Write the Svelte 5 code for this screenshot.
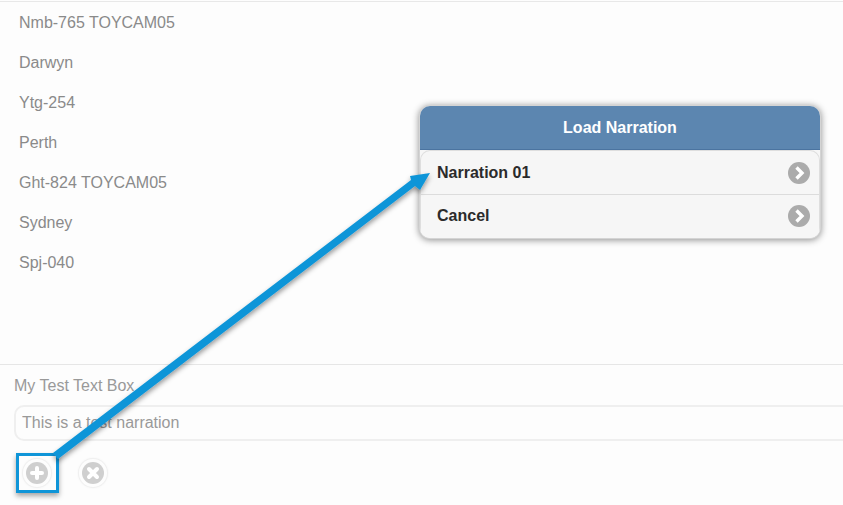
<script>
	const places = ['Nmb-765 TOYCAM05', 'Darwyn', 'Ytg-254', 'Perth', 'Ght-824 TOYCAM05', 'Sydney', 'Spj-040'];
	const options = ['Narration 01', 'Cancel'];
</script>

<div class="page">
	<ul class="list">
		{#each places as place}
			<li>{place}</li>
		{/each}
	</ul>

	<div class="form">
		<label for="narration">My Test Text Box</label>
		<input id="narration" type="text" value="This is a test narration" />
		<div class="actions">
			<button class="round" aria-label="Add">
				<svg width="22" height="22" viewBox="0 0 22 22">
					<circle cx="11" cy="11" r="11" fill="#cfcfcf" />
					<path d="M11 6v10M6 11h10" stroke="#fff" stroke-width="4" stroke-linecap="round" />
				</svg>
			</button>
			<button class="round" aria-label="Delete">
				<svg width="22" height="22" viewBox="0 0 22 22">
					<circle cx="11" cy="11" r="11" fill="#cfcfcf" />
					<path d="M7 7l8 8M15 7l-8 8" stroke="#fff" stroke-width="4" stroke-linecap="round" />
				</svg>
			</button>
		</div>
	</div>

	<div class="dialog">
		<h1>Load Narration</h1>
		<div class="menu">
			{#each options as option}
				<div class="option">
					<span>{option}</span>
					<svg width="22" height="22" viewBox="0 0 22 22">
						<circle cx="11" cy="11" r="11" fill="#ababab" />
						<path d="M8.500 5.500L14 11l-5.500 5.500" fill="none" stroke="#fff" stroke-width="3.400" />
					</svg>
				</div>
			{/each}
		</div>
	</div>

	<div class="highlight"></div>

	<svg class="arrow" width="843" height="505" viewBox="0 0 843 505">
		<defs>
			<filter id="soft" x="-10%" y="-10%" width="120%" height="120%">
				<feDropShadow dx="0" dy="3" stdDeviation="2.500" flood-color="#000" flood-opacity="0.4" />
			</filter>
		</defs>
		<path
			d="M53 453 L58 459 L415 186 L420 190 L430 173 L410 176 L411 180 Z"
			fill="#0f95d8"
			filter="url(#soft)"
		/>
	</svg>
</div>

<style>
	:global(body) {
		margin: 0;
		background: #fdfdfd;
	}

	.page {
		position: relative;
		width: 843px;
		height: 505px;
		overflow: hidden;
		font-family: 'Liberation Sans', Arial, sans-serif;
		font-size: 16px;
		color: #8a8a8a;
	}

	.list {
		list-style: none;
		margin: 1px 0 0;
		padding: 2px 0 0;
		height: 363px;
		box-sizing: border-box;
		border-top: 1px solid #e8e8e8;
	}

	.list li {
		height: 40px;
		line-height: 38px;
		padding-left: 19px;
	}

	.form {
		border-top: 1px solid #e6e6e6;
		padding: 12px 0 0 14px;
	}

	label {
		display: block;
		line-height: 18px;
		color: #999;
	}

	input {
		display: block;
		box-sizing: border-box;
		width: 860px;
		height: 36px;
		margin-top: 10px;
		padding: 0 6px;
		border: 2px solid #efefef;
		border-radius: 10px;
		background: #fdfdfd;
		font: inherit;
		color: #999;
		outline: none;
	}

	.actions {
		display: flex;
		gap: 28px;
		margin-top: 18px;
		padding-left: 9px;
	}

	.round {
		display: flex;
		width: 28px;
		height: 28px;
		padding: 0;
		align-items: center;
		justify-content: center;
		border: 0;
		border-radius: 50%;
		background: #fdfdfd;
		box-shadow: 0 0 0 1px #f0f0f0, 0 0 3px #e8e8e8;
	}

	.dialog {
		position: absolute;
		left: 420px;
		top: 106px;
		width: 400px;
		height: 132px;
		display: flex;
		flex-direction: column;
		border-radius: 10px;
		background: #f6f6f6;
		box-shadow: 0 0 0 1px #d4d4d4, 0 1px 7px 1px rgba(0, 0, 0, 0.45);
		overflow: hidden;
	}

	h1 {
		margin: 0;
		height: 44px;
		line-height: 43px;
		flex: none;
		box-sizing: border-box;
		background: #5c86b0;
		border-bottom: 1px solid #4b74a0;
		color: #fff;
		font-size: 16px;
		font-weight: bold;
		text-align: center;
	}

	.menu {
		flex: 1;
		border-radius: 10px 10px 0 0;
		border: 1px solid #dedede;
		border-bottom: 0;
		background: #f6f6f6;
	}

	.option {
		display: flex;
		align-items: center;
		justify-content: space-between;
		height: 43px;
		padding: 0 9px 0 16px;
		box-sizing: border-box;
		font-weight: bold;
		color: #2b2b2b;
	}

	.option + .option {
		border-top: 1px solid #dcdcdc;
	}

	.highlight {
		position: absolute;
		left: 16px;
		top: 453px;
		width: 43px;
		height: 40px;
		box-sizing: border-box;
		border: 3px solid #0f95d8;
		box-shadow: 0 3px 5px rgba(0, 0, 0, 0.35);
	}

	.arrow {
		position: absolute;
		left: 0;
		top: 0;
		pointer-events: none;
	}
</style>
